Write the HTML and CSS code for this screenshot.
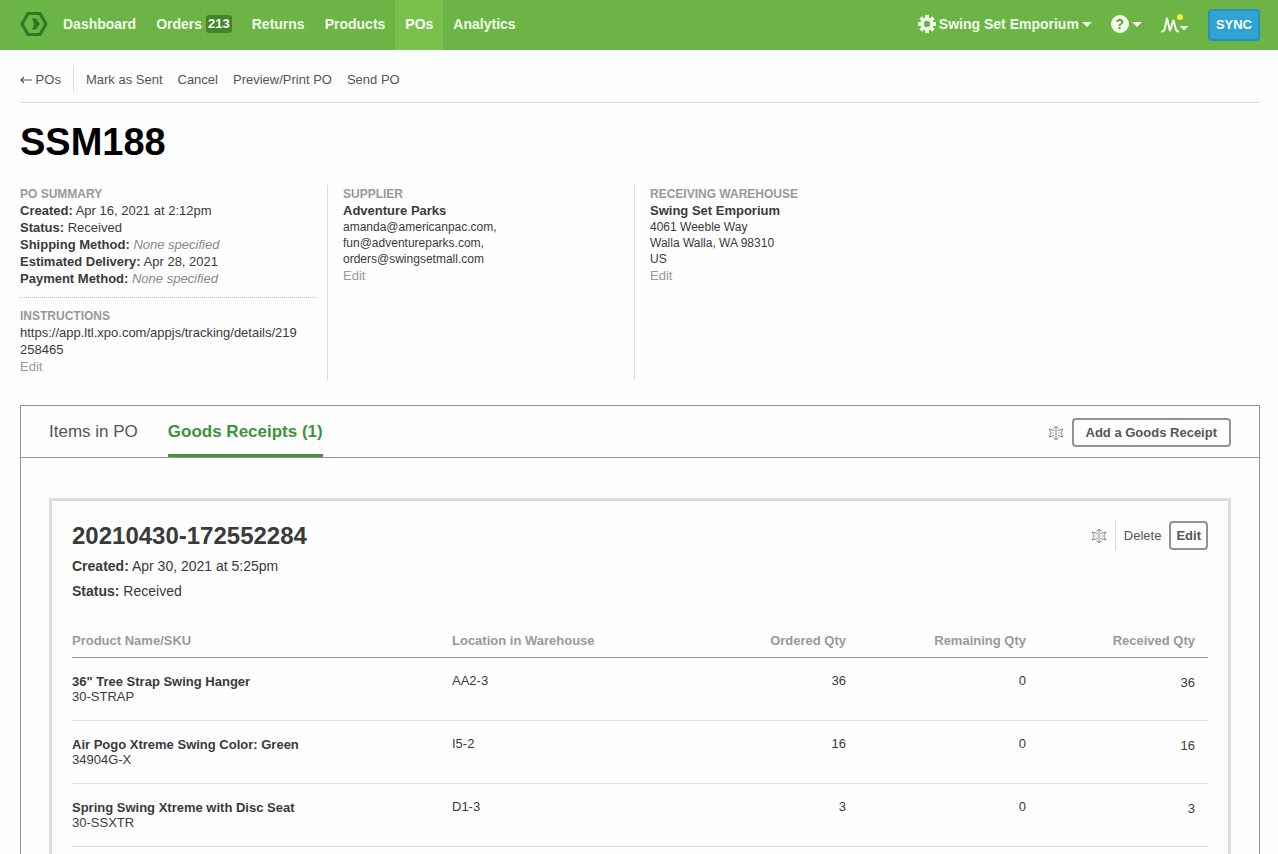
FILE: index.html
```html
<!DOCTYPE html>
<html lang="en">
<head>
    <meta charset="UTF-8">
    <meta name="viewport" content="width=device-width, initial-scale=1.0">
    <title>PO SSM188</title>
    <link rel="stylesheet" href="styles.css">
</head>
<body>
    <header class="navbar">
        <a class="logo" href="#" aria-label="Home">
            <svg width="28" height="26" viewBox="0 0 28 26">
                <path d="M8 2.500h12L26 13l-6 10.500H8L2 13z" fill="none" stroke="#2b7a24" stroke-width="3"/>
                <path d="M11.500 7.500H16l4 5.500-4 5.500h-4.500Q16.500 13 11.500 7.500z" fill="#2b7a24"/>
            </svg>
        </a>
        <nav class="main-nav">
            <a href="#">Dashboard</a>
            <a href="#">Orders <span class="badge">213</span></a>
            <a href="#">Returns</a>
            <a href="#">Products</a>
            <a href="#" class="active">POs</a>
            <a href="#">Analytics</a>
        </nav>
        <div class="nav-right">
            <button class="nav-button" type="button">
                <svg width="18" height="18" viewBox="0 0 18 18">
                    <g stroke="#f0fce8" stroke-width="4">
                        <path d="M9 0v5M9 13v5M0 9h5M13 9h5M2.600 2.600l3.500 3.500M11.900 11.900l3.500 3.500M2.600 15.400l3.500-3.500M11.900 6.100l3.500-3.500"/>
                    </g>
                    <circle cx="9" cy="9" r="4.700" fill="none" stroke="#f0fce8" stroke-width="3.400"/>
                    <circle cx="9" cy="9" r="3" fill="#6cb446"/>
                </svg>
                Swing Set Emporium
                <span class="caret"></span>
            </button>
            <button class="nav-button" type="button" aria-label="Help">
                <span class="help-icon">?</span>
                <span class="caret"></span>
            </button>
            <button class="nav-button" type="button" aria-label="Activity">
                <svg width="28" height="22" viewBox="0 0 28 22">
                    <path d="M0 18.500c3 0 3.500-1 4-4L6 5l3 13 3.500-11 2 8c.6 3 1.500 3.500 3.500 3.500" fill="none" stroke="#f0fce8" stroke-width="2" stroke-linejoin="bevel"/>
                    <path d="M18.500 13h9L23 17.500z" fill="#f0fce8"/>
                    <circle cx="19" cy="4" r="3" fill="#fbee38"/>
                </svg>
            </button>
            <button class="sync" type="button">SYNC</button>
        </div>
    </header>

    <main class="page">
        <div class="toolbar">
            <a class="back" href="#"><svg width="12" height="8" viewBox="0 0 12 8"><path d="M12 4H1M4 1L1 4l3 3" fill="none" stroke="#555" stroke-width="1.200"/></svg> POs</a>
            <a href="#">Mark as Sent</a>
            <a href="#">Cancel</a>
            <a href="#">Preview/Print PO</a>
            <a href="#">Send PO</a>
        </div>

        <h1>SSM188</h1>

        <div class="summary">
            <section class="summary-col">
                <h2>PO Summary</h2>
                <p><b>Created:</b> Apr 16, 2021 at 2:12pm</p>
                <p><b>Status:</b> Received</p>
                <p><b>Shipping Method:</b> <i>None specified</i></p>
                <p><b>Estimated Delivery:</b> Apr 28, 2021</p>
                <p><b>Payment Method:</b> <i>None specified</i></p>
                <div class="instructions">
                    <h2>Instructions</h2>
                    <p>https://app.ltl.xpo.com/appjs/tracking/details/219258465</p>
                    <a href="#">Edit</a>
                </div>
            </section>
            <section class="summary-col">
                <h2>Supplier</h2>
                <p><b>Adventure Parks</b></p>
                <address>
                    amanda@americanpac.com,<br>
                    fun@adventureparks.com,<br>
                    orders@swingsetmall.com
                </address>
                <a href="#">Edit</a>
            </section>
            <section class="summary-col">
                <h2>Receiving Warehouse</h2>
                <p><b>Swing Set Emporium</b></p>
                <address>
                    4061 Weeble Way<br>
                    Walla Walla, WA 98310<br>
                    US
                </address>
                <a href="#">Edit</a>
            </section>
        </div>

        <div class="panel">
            <div class="tabs">
                <a class="tab" href="#">Items in PO</a>
                <a class="tab active" href="#">Goods Receipts (1)</a>
                <div class="tab-actions">
                    <svg class="flake" width="16" height="16" viewBox="0 0 16 16">
                        <path d="M8 1v14M5.500 3.500L8 1l2.500 2.500M5.500 12.500L8 15l2.500-2.500M6.500 5.500L1 4l2.200 4L1 12l5.500-1.500M9.500 5.500L15 4l-2.200 4 2.200 4-5.500-1.500"/>
                        <path class="faint" d="M3.500 8h9"/>
                    </svg>
                    <button class="btn btn-wide" type="button">Add a Goods Receipt</button>
                </div>
            </div>

            <article class="receipt">
                <div class="receipt-header">
                    <div>
                        <h3>20210430-172552284</h3>
                        <p><b>Created:</b> Apr 30, 2021 at 5:25pm</p>
                        <p><b>Status:</b> Received</p>
                    </div>
                    <div class="receipt-actions">
                        <svg class="flake" width="16" height="16" viewBox="0 0 16 16">
                            <path d="M8 1v14M5.500 3.500L8 1l2.500 2.500M5.500 12.500L8 15l2.500-2.500M6.500 5.500L1 4l2.200 4L1 12l5.500-1.500M9.500 5.500L15 4l-2.200 4 2.200 4-5.500-1.500"/>
                            <path class="faint" d="M3.500 8h9"/>
                        </svg>
                        <a class="delete" href="#">Delete</a>
                        <button class="btn" type="button">Edit</button>
                    </div>
                </div>

                <table class="items">
                    <thead>
                        <tr>
                            <th class="product">Product Name/SKU</th>
                            <th>Location in Warehouse</th>
                            <th class="qty">Ordered Qty</th>
                            <th class="qty">Remaining Qty</th>
                            <th class="qty received">Received Qty</th>
                        </tr>
                    </thead>
                    <tbody>
                        <tr>
                            <td class="product"><b>36" Tree Strap Swing Hanger</b><br>30-STRAP</td>
                            <td>AA2-3</td>
                            <td class="qty">36</td>
                            <td class="qty">0</td>
                            <td class="qty received">36</td>
                        </tr>
                        <tr>
                            <td class="product"><b>Air Pogo Xtreme Swing Color: Green</b><br>34904G-X</td>
                            <td>I5-2</td>
                            <td class="qty">16</td>
                            <td class="qty">0</td>
                            <td class="qty received">16</td>
                        </tr>
                        <tr>
                            <td class="product"><b>Spring Swing Xtreme with Disc Seat</b><br>30-SSXTR</td>
                            <td>D1-3</td>
                            <td class="qty">3</td>
                            <td class="qty">0</td>
                            <td class="qty received">3</td>
                        </tr>
                    </tbody>
                </table>
            </article>
        </div>
    </main>
</body>
</html>
```

FILE: styles.css
```css
* {
    box-sizing: border-box;
}

body {
    margin: 0;
    font-family: "Liberation Sans", Arial, sans-serif;
    font-size: 13px;
    line-height: 17px;
    color: #3a3a3a;
    background: #fefefe;
}

h1, h2, h3, p {
    margin: 0;
}

a {
    color: #555;
    text-decoration: none;
}

button {
    font-family: inherit;
    cursor: pointer;
}

/* Top bar */
.navbar {
    display: flex;
    align-items: center;
    height: 50px;
    padding: 0 18px 0 20px;
    background: #6cb446;
}

.logo {
    display: flex;
    margin-right: 5px;
    padding-bottom: 2px;
}

.main-nav {
    display: flex;
    height: 100%;
}

.main-nav a {
    display: flex;
    align-items: center;
    gap: 4px;
    padding: 0 10px 2px;
    font-size: 14px;
    font-weight: bold;
    color: #f0fce8;
}

.main-nav a.active {
    background: #77c14c;
    color: #fff;
}

.badge {
    padding: 0 2px;
    border-radius: 3px;
    font-size: 13px;
    line-height: 18px;
    background: #45842b;
}

.nav-right {
    display: flex;
    align-items: center;
    gap: 19px;
    margin-left: auto;
}

.nav-button {
    display: flex;
    align-items: center;
    gap: 3px;
    padding: 0 0 2px;
    border: 0;
    font-size: 14px;
    font-weight: bold;
    color: #f0fce8;
    background: none;
}

.caret {
    border: 5px solid transparent;
    border-top-color: #f0fce8;
    border-bottom: 0;
}

.help-icon {
    width: 18px;
    height: 18px;
    border-radius: 50%;
    line-height: 18px;
    color: #5a9f38;
    background: #f0fce8;
}

.sync {
    height: 32px;
    padding: 0 6px 2px;
    border: 2px solid #2a8fbd;
    border-radius: 4px;
    font-size: 13px;
    font-weight: bold;
    color: #fff;
    background: #30a3d5;
}

.page {
    padding: 0 18px 0 20px;
}

.toolbar {
    display: flex;
    align-items: center;
    gap: 15px;
    height: 53px;
    padding-top: 6px;
    border-bottom: 1px solid #ddd;
}

.toolbar .back {
    margin-right: -3px;
    padding: 4px 12px 4px 0;
    border-right: 1px dotted #bbb;
}

h1 {
    padding: 16px 0 20px;
    font-size: 38px;
    line-height: 46px;
    color: #000;
}

/* PO details */
.summary {
    display: grid;
    grid-template-columns: repeat(4, 1fr);
    min-height: 195px;
    padding-right: 12px;
}

.summary-col {
    padding: 0 15px;
}

.summary-col:first-child {
    padding: 0 10px 0 0;
}

.summary-col + .summary-col {
    border-left: 1px solid #ddd;
}

.summary h2 {
    padding-top: 1px;
    font-size: 12px;
    line-height: 16px;
    color: #999;
    text-transform: uppercase;
}

.summary i {
    color: #888;
}

.summary a {
    color: #999;
}

.summary address {
    font-size: 12px;
    font-style: normal;
    line-height: 16px;
}

.instructions {
    margin-top: 10px;
    padding-top: 9px;
    border-top: 1px dotted #bbb;
}

.instructions p {
    padding-right: 16px;
    overflow-wrap: anywhere;
}

/* Tabbed panel */
.panel {
    margin-top: 25px;
    border: 1px solid #929292;
}

.tabs {
    display: flex;
    gap: 30px;
    height: 52px;
    padding: 0 28px;
    border-bottom: 1px solid #929292;
}

.tab {
    font-size: 17px;
    line-height: 51px;
}

.tab.active {
    border-bottom: 3px solid #45913f;
    font-weight: bold;
    color: #3d933b;
}

.tab-actions,
.receipt-actions {
    display: flex;
    align-items: center;
    gap: 8px;
    margin-left: auto;
}

.tab-actions {
    padding-top: 2px;
}

.flake {
    fill: none;
    stroke: #8a8a8a;
}

.flake .faint {
    stroke: #ccc;
}

.btn {
    height: 29px;
    padding: 0 5px;
    border: 2px solid #929292;
    border-radius: 4px;
    font-size: 13px;
    font-weight: bold;
    color: #555;
    background: #fff;
}

.btn-wide {
    padding: 0 12px;
}

.receipt {
    margin: 40px 28px;
    padding: 20px 20px 40px;
    border: 3px solid #ddd;
}

.receipt-header {
    display: flex;
    align-items: flex-start;
    font-size: 14px;
    line-height: 25px;
}

.receipt h3 {
    padding-bottom: 3px;
    font-size: 24px;
    line-height: 30px;
}

.receipt-actions {
    font-size: 13px;
}

.delete {
    padding: 2px 0 2px 8px;
    border-left: 1px solid #ddd;
}

.items {
    width: 100%;
    margin-top: 24px;
    border-collapse: collapse;
    table-layout: fixed;
}

.items th {
    height: 29px;
    padding: 0 0 4px;
    border-bottom: 1px solid #929292;
    font-size: 13px;
    text-align: left;
    color: #999;
}

.items td {
    height: 63px;
    padding: 14px 0 0;
    border-bottom: 1px solid #ddd;
    vertical-align: top;
}

.items td.product {
    padding-top: 16px;
    line-height: 15px;
}

.items th.product {
    width: 380px;
}

.items .qty {
    width: 180px;
    padding-right: 13px;
    text-align: right;
}

.items .received {
    width: 169px;
}

.items td.received {
    padding-top: 16px;
}
```
